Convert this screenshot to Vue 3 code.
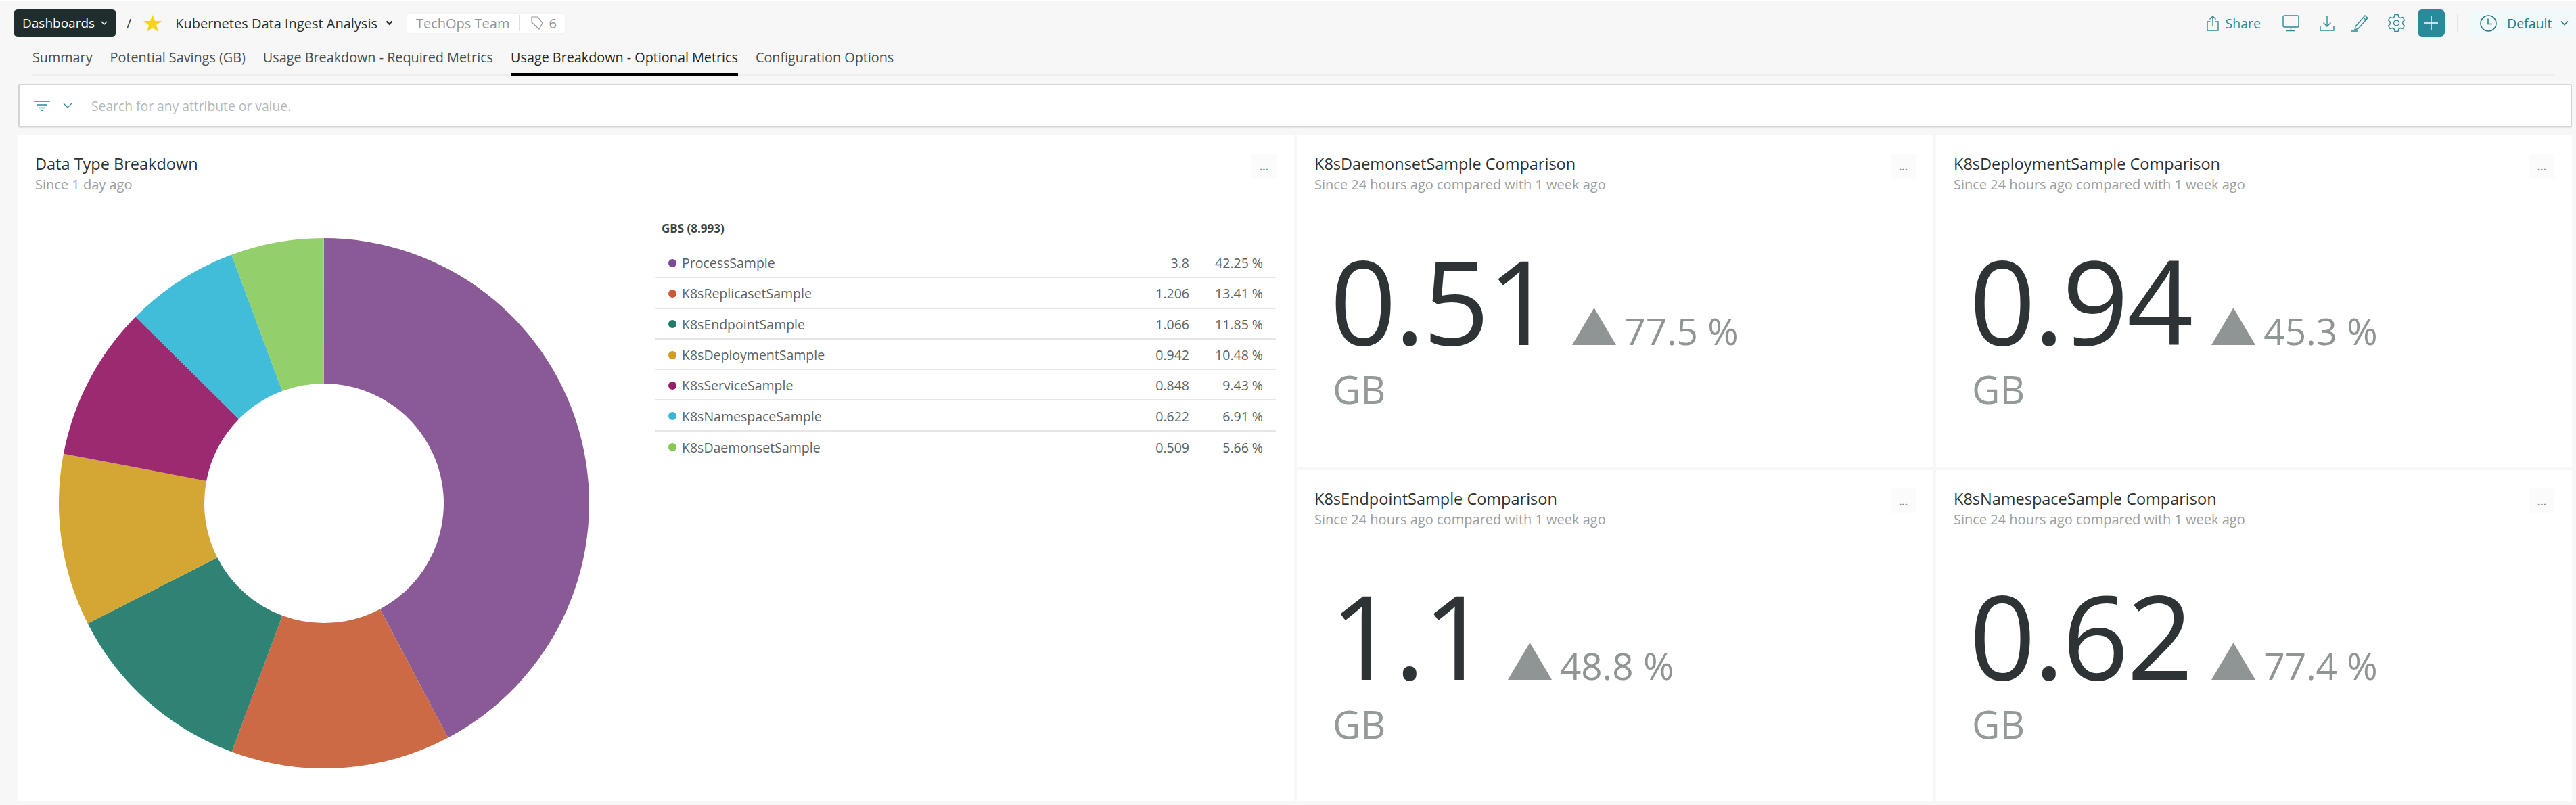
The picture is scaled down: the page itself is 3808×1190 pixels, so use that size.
<script setup>
import { computed } from "vue";

const tabs = [
  { label: "Summary" },
  { label: "Potential Savings (GB)" },
  { label: "Usage Breakdown - Required Metrics" },
  { label: "Usage Breakdown - Optional Metrics", active: true },
  { label: "Configuration Options" },
];

const rows = [
  { name: "ProcessSample", value: "3.8", pct: 42.25, color: "#7d4a96", slice: "#8a5a96" },
  { name: "K8sReplicasetSample", value: "1.206", pct: 13.41, color: "#c95c36", slice: "#cb6a45" },
  { name: "K8sEndpointSample", value: "1.066", pct: 11.85, color: "#1f7a68", slice: "#2f8374" },
  { name: "K8sDeploymentSample", value: "0.942", pct: 10.48, color: "#d49c1c", slice: "#d4a634" },
  { name: "K8sServiceSample", value: "0.848", pct: 9.43, color: "#951f68", slice: "#9c2a70" },
  { name: "K8sNamespaceSample", value: "0.622", pct: 6.91, color: "#38b6d8", slice: "#41bcd9" },
  { name: "K8sDaemonsetSample", value: "0.509", pct: 5.66, color: "#85c956", slice: "#93cf6a" },
];

const metrics = [
  { title: "K8sDaemonsetSample Comparison", value: "0.51", change: "77.5 %" },
  { title: "K8sDeploymentSample Comparison", value: "0.94", change: "45.3 %" },
  { title: "K8sEndpointSample Comparison", value: "1.1", change: "48.8 %" },
  { title: "K8sNamespaceSample Comparison", value: "0.62", change: "77.4 %" },
];

// donut slices, clockwise from the top
const slices = computed(() => {
  const R = 392;
  const r = 177;
  const c = 392;
  const pt = (rad, a) => `${(c + rad * Math.sin(a)).toFixed(2)} ${(c - rad * Math.cos(a)).toFixed(2)}`;
  let start = 0;
  return rows.map((row) => {
    const end = start + (row.pct / 100) * Math.PI * 2;
    const large = end - start > Math.PI ? 1 : 0;
    const d = `M${pt(R, start)} A${R} ${R} 0 ${large} 1 ${pt(R, end)} L${pt(r, end)} A${r} ${r} 0 ${large} 0 ${pt(r, start)} Z`;
    start = end;
    return { d, fill: row.slice };
  });
});
</script>

<template>
  <div class="page">
    <header class="topbar">
      <button class="crumb">Dashboards
        <svg width="10" height="7" viewBox="0 0 10 7"><path d="M1 1l4 4 4-4" fill="none" stroke="#fff" stroke-width="1.4" /></svg>
      </button>
      <span class="slash">/</span>
      <svg class="star" width="27" height="25" viewBox="0 0 27 25"><path d="M13.5 0l3.600 9h9.900l-8 6.200 3 9.800-8.500-6-8.500 6 3-9.800-8-6.200h9.900z" fill="#f5d415" /></svg>
      <h1 class="dash-title">Kubernetes Data Ingest Analysis</h1>
      <svg class="title-chev" width="11" height="8" viewBox="0 0 11 8"><path d="M1.500 1.500l4 4 4-4" fill="none" stroke="#22302f" stroke-width="2.400" /></svg>
      <div class="tagbox">
        <span>TechOps Team</span>
        <i class="tag-sep"></i>
        <svg width="18" height="22" viewBox="0 0 18 22"><path d="M1 2h9l7 9-5 9-11-10z" fill="none" stroke="#8f9595" stroke-width="1.200" /></svg>
        <span>6</span>
      </div>

      <div class="actions">
        <svg class="ic-share" width="18" height="23" viewBox="0 0 18 23" fill="none" stroke="#2a8a99" stroke-width="1.400"><path d="M5.500 9H1v13h16V9h-4.500M9 16V1M4.500 5.500L9 1l4.500 4.500" /></svg>
        <span class="share">Share</span>
        <svg class="ic-monitor" width="25" height="25" viewBox="0 0 25 25" fill="none" stroke="#2a8a99" stroke-width="1.400"><rect x="1" y="1" width="23" height="17" rx="2" /><path d="M12.500 18v5M6 23.500h13" /></svg>
        <svg class="ic-download" width="22" height="23" viewBox="0 0 22 23" fill="none" stroke="#2a8a99" stroke-width="1.400"><path d="M11 1v15M5.500 10.500L11 16l5.500-5.500M1 15v7h20v-7" /></svg>
        <svg class="ic-pencil" width="26" height="26" viewBox="0 0 26 26" fill="none" stroke="#2a8a99" stroke-width="1.400"><path d="M6 18L20 2l4 3.500L10 21.500l-5 1.500zM17.500 5l4 3.500M0 25h10" /></svg>
        <svg class="ic-gear" width="27" height="28" viewBox="0 0 27 28" fill="none" stroke="#2a8a99" stroke-width="1.400"><circle cx="13.500" cy="14" r="4" /><path d="M11 1.500h5l.8 3.500 2.700 1.500 3.400-1 2.500 4.300-2.600 2.500v3.400l2.600 2.500-2.500 4.300-3.400-1-2.700 1.500-.8 3.500h-5l-.8-3.500-2.700-1.500-3.400 1L1.600 18.200l2.600-2.500v-3.400L1.600 9.800l2.500-4.300 3.400 1L10.200 5z" /></svg>
        <button class="plus">
          <svg width="20" height="20" viewBox="0 0 20 20"><path d="M10 0v20M0 10h20" stroke="#fff" stroke-width="1.400" /></svg>
        </button>
        <i class="act-sep"></i>
        <div class="timepick">
          <svg width="25" height="25" viewBox="0 0 25 25" fill="none" stroke="#1f7a85" stroke-width="1.500"><circle cx="12.500" cy="12.500" r="11.500" /><path d="M12 5.500v8h6" /></svg>
          <span>Default</span>
          <svg width="12" height="8" viewBox="0 0 12 8"><path d="M1 1.500l5 5 5-5" fill="none" stroke="#1f7a85" stroke-width="1.600" /></svg>
        </div>
      </div>
    </header>

    <nav class="tabs">
      <a v-for="tab in tabs" :key="tab.label" class="tab" :class="{ active: tab.active }">{{ tab.label }}</a>
    </nav>

    <div class="filter">
      <svg width="25" height="15" viewBox="0 0 25 15"><path d="M0 1h24M4 6h16M8 10.500h8M10.500 14.500h3" stroke="#2a8a99" stroke-width="1.700" /></svg>
      <svg class="filter-chev" width="14" height="8" viewBox="0 0 14 8"><path d="M1 1l6 6 6-6" fill="none" stroke="#2a8a99" stroke-width="1.200" /></svg>
      <i class="filter-sep"></i>
      <span class="placeholder">Search for any attribute or value.</span>
    </div>

    <main class="grid">
      <section class="card breakdown">
        <div class="card-head">
          <div>
            <h2>Data Type Breakdown</h2>
            <p>Since 1 day ago</p>
          </div>
          <button class="more">...</button>
        </div>
        <div class="breakdown-body">
          <svg class="donut" width="784" height="784" viewBox="0 0 784 784">
            <path v-for="s in slices" :key="s.fill" :d="s.d" :fill="s.fill" />
          </svg>
          <div class="legend">
            <div class="legend-title">GBS (8.993)</div>
            <div v-for="row in rows" :key="row.name" class="legend-row">
              <i class="dot" :style="{ backgroundColor: row.color }"></i>
              <span class="legend-name">{{ row.name }}</span>
              <span class="legend-val">{{ row.value }}</span>
              <span class="legend-pct">{{ row.pct }} %</span>
            </div>
          </div>
        </div>
      </section>

      <section v-for="m in metrics" :key="m.title" class="card metric">
        <div class="card-head">
          <div>
            <h2>{{ m.title }}</h2>
            <p>Since 24 hours ago compared with 1 week ago</p>
          </div>
          <button class="more">...</button>
        </div>
        <div class="value-row">
          <span class="big">{{ m.value }}</span>
          <svg class="tri" width="65" height="55" viewBox="0 0 65 55"><path d="M32.500 0L65 55H0z" fill="#8f9594" /></svg>
          <span class="change">{{ m.change }}</span>
        </div>
        <div class="unit">GB</div>
      </section>
    </main>
  </div>
</template>

<style scoped>
.page {
  width: 3808px;
  height: 1190px;
  overflow: hidden;
  box-sizing: border-box;
  border-top: 2px solid #fff;
  background: #f7f7f7;
  font-family: "Open Sans", "Noto Sans", sans-serif;
  color: #2e3436;
}
button {
  font-family: inherit;
  border: 0;
  padding: 0;
}
.topbar {
  display: flex;
  align-items: center;
  height: 40px;
  margin-top: 12px;
  padding-left: 20px;
}
.crumb {
  display: flex;
  align-items: center;
  gap: 9px;
  width: 152px;
  height: 40px;
  padding-left: 13px;
  box-sizing: border-box;
  border-radius: 6px;
  background: #1f2e2d;
  color: #fff;
  font-size: 19px;
}
.slash {
  margin-left: 15px;
  font-size: 19.500px;
}
.star {
  margin-left: 18px;
}
.dash-title {
  margin: 0 0 0 20px;
  font-size: 20px;
  font-weight: 500;
  color: #22302f;
}
.title-chev {
  margin-left: 12px;
}
.tagbox {
  display: flex;
  align-items: center;
  width: 233px;
  height: 29px;
  margin-left: 21px;
  padding-left: 13px;
  box-sizing: border-box;
  border-radius: 3px;
  background: #fff;
  box-shadow: 0 0 2px #e4e4e4;
  font-size: 20px;
  color: #8f9595;
}
.tag-sep {
  width: 1px;
  height: 24px;
  margin: 0 17px 0 14px;
  background: #dfe1e1;
}
.tagbox svg {
  margin-right: 8px;
}
.actions {
  display: flex;
  align-items: center;
  margin-left: auto;
  color: #2a8a99;
}
.share {
  margin-left: 10px;
  font-size: 19.500px;
}
.ic-monitor {
  margin-left: 32px;
}
.ic-download {
  margin-left: 30px;
}
.ic-pencil {
  margin-left: 25px;
}
.ic-gear {
  margin-left: 27px;
}
.plus {
  display: flex;
  align-items: center;
  justify-content: center;
  width: 40px;
  height: 40px;
  margin-left: 18px;
  border-radius: 6px;
  background: #2a8a99;
}
.act-sep {
  width: 2px;
  height: 28px;
  margin-left: 18px;
  background: #e3e4e4;
}
.timepick {
  display: flex;
  align-items: center;
  width: 158px;
  height: 40px;
  margin-left: 16px;
  padding-left: 16px;
  box-sizing: border-box;
  background: #f1f9fa;
  color: #1f7a85;
  font-size: 19.500px;
}
.timepick span {
  margin: 0 13px 0 15px;
}
.tabs {
  display: flex;
  gap: 26px;
  height: 48px;
  margin: 8px 32px 0 48px;
  border-bottom: 2px solid #eeeeee;
}
.tab {
  box-sizing: border-box;
  height: 50px;
  line-height: 46px;
  font-size: 19.800px;
  color: #464e4e;
}
.tab.active {
  border-bottom: 4px solid #000;
  color: #1f2626;
}
.filter {
  display: flex;
  align-items: center;
  box-sizing: border-box;
  height: 64px;
  margin: 12px 6px 0 27px;
  padding-left: 21px;
  background: #fff;
  border: 2px solid #d4d5d5;
  border-radius: 2px;
  box-shadow: 0 1px 1px #e2e2e2;
}
.filter-chev {
  margin-left: 18px;
}
.filter-sep {
  width: 1px;
  height: 24px;
  margin-left: 18px;
  background: #dfe1e1;
}
.placeholder {
  margin-left: 9px;
  font-size: 19.300px;
  color: #b5b8b8;
}
.grid {
  display: grid;
  grid-template-columns: 1887px 941px 940px;
  grid-template-rows: 490px 489px;
  column-gap: 4px;
  row-gap: 5px;
  margin: 12px 0 0 26px;
}
.card {
  box-sizing: border-box;
  padding: 27px 26px 0;
  background: #fff;
}
.breakdown {
  grid-row: 1 / 3;
}
.card-head {
  display: flex;
  justify-content: space-between;
  align-items: flex-start;
  height: 59px;
}
h2 {
  margin: 1px 0 0;
  font-size: 23.500px;
  line-height: 28px;
  font-weight: 500;
  color: #2b3232;
}
p {
  margin: 4px 0 0;
  font-size: 20px;
  line-height: 26px;
  color: #9a9e9e;
}
.more {
  width: 37px;
  height: 37px;
  border-radius: 3px;
  background: #fbfbfb;
  color: #8a9090;
  font-size: 15px;
  font-weight: 700;
  line-height: 30px;
}
.breakdown-body {
  display: flex;
  align-items: flex-start;
}
.donut {
  flex: none;
  margin: 66px 0 0 35px;
}
.legend {
  width: 918px;
  margin: 39px 0 0 97px;
  font-size: 19.500px;
  color: #5b6262;
}
.legend-title {
  height: 41px;
  padding-left: 10px;
  font-size: 17px;
  font-weight: 700;
  line-height: 26px;
  color: #3c4444;
}
.legend-row {
  display: flex;
  align-items: center;
  box-sizing: border-box;
  height: 45.300px;
  padding: 2px 19px 0 20px;
  border-bottom: 2px solid #e6e6e6;
}
.legend-row:last-child {
  border-bottom: 0;
}
.dot {
  width: 12px;
  height: 12px;
  border-radius: 50%;
}
.legend-name {
  margin-left: 8px;
  flex: 1;
}
.legend-pct {
  width: 109px;
  text-align: right;
}
.value-row {
  display: flex;
  align-items: baseline;
  height: 172px;
  margin-top: 71px;
  padding-left: 23px;
}
.big {
  font-size: 172px;
  line-height: 172px;
  letter-spacing: -3px;
  color: #2e3436;
}
.tri {
  margin-left: 30px;
}
.change {
  margin-left: 12px;
  font-size: 55px;
  line-height: 60px;
  color: #8f9594;
}
.unit {
  margin-top: 18px;
  padding-left: 27px;
  font-size: 57px;
  line-height: 57px;
  color: #949999;
}
</style>

<style>
html, body {
  margin: 0;
  background: #f7f7f7;
}
</style>
